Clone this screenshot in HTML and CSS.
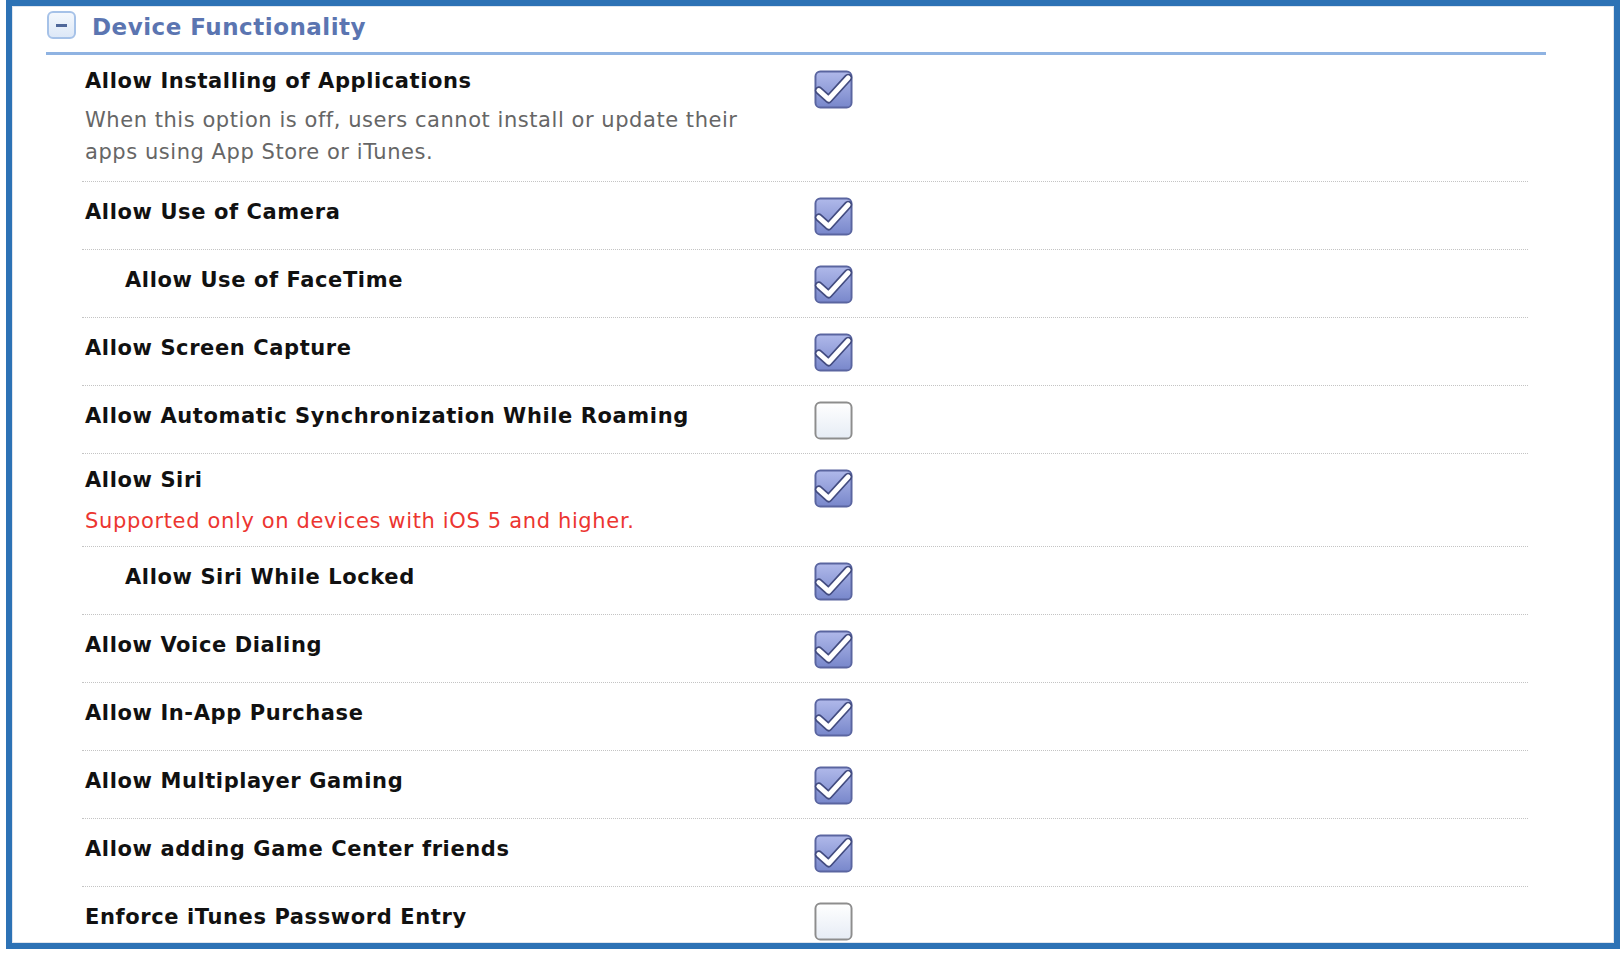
FILE: index.html
```html
<!DOCTYPE html>
<html lang="en">
<head>
  <meta charset="UTF-8" />
  <title>Device Functionality</title>
  <link rel="stylesheet" href="styles.css">
</head>
<body>
  <svg width="0" height="0" class="defs">
    <defs>
      <linearGradient id="onFill" x1="0" y1="0" x2="0" y2="1">
        <stop offset="0" stop-color="#b0b9ea" />
        <stop offset="1" stop-color="#7887cb" />
      </linearGradient>
      <linearGradient id="offFill" x1="0" y1="0" x2="0" y2="1">
        <stop offset="0" stop-color="#ffffff" />
        <stop offset="1" stop-color="#e6ecf5" />
      </linearGradient>
      <symbol id="boxOn" viewBox="0 0 40 40">
        <rect x="1.5" y="1.5" width="37" height="37" rx="5" fill="url(#onFill)" stroke="#5a65a0" stroke-width="2" />
        <path d="M5 21 L15 30 L35 8" fill="none" stroke="#434c80" stroke-width="8.5" stroke-linejoin="round" stroke-linecap="round" />
        <path d="M5 21 L15 30 L35 8" fill="none" stroke="#ffffff" stroke-width="5" stroke-linejoin="round" stroke-linecap="round" />
      </symbol>
      <symbol id="boxOff" viewBox="0 0 40 40">
        <rect x="1.5" y="1.5" width="37" height="37" rx="5" fill="url(#offFill)" stroke="#8d8d8d" stroke-width="2" />
      </symbol>
    </defs>
  </svg>

  <div class="frame">
    <div class="panel">
      <div class="section">
        <div class="section-head">
          <span class="toggle"><span class="dash"></span></span>
          <h2>Device Functionality</h2>
        </div>

        <div class="rows">
          <div class="row first">
            <div class="text">
              <div class="label">Allow Installing of Applications</div>
              <div class="desc">When this option is off, users cannot install or update their<br>apps using App Store or iTunes.</div>
            </div>
            <svg class="check"><use href="#boxOn" /></svg>
          </div>

          <div class="row">
            <div class="text"><div class="label">Allow Use of Camera</div></div>
            <svg class="check"><use href="#boxOn" /></svg>
          </div>

          <div class="row sub">
            <div class="text"><div class="label">Allow Use of FaceTime</div></div>
            <svg class="check"><use href="#boxOn" /></svg>
          </div>

          <div class="row">
            <div class="text"><div class="label">Allow Screen Capture</div></div>
            <svg class="check"><use href="#boxOn" /></svg>
          </div>

          <div class="row">
            <div class="text"><div class="label">Allow Automatic Synchronization While Roaming</div></div>
            <svg class="check"><use href="#boxOff" /></svg>
          </div>

          <div class="row noted">
            <div class="text">
              <div class="label">Allow Siri</div>
              <div class="desc warn">Supported only on devices with iOS 5 and higher.</div>
            </div>
            <svg class="check"><use href="#boxOn" /></svg>
          </div>

          <div class="row sub">
            <div class="text"><div class="label">Allow Siri While Locked</div></div>
            <svg class="check"><use href="#boxOn" /></svg>
          </div>

          <div class="row">
            <div class="text"><div class="label">Allow Voice Dialing</div></div>
            <svg class="check"><use href="#boxOn" /></svg>
          </div>

          <div class="row">
            <div class="text"><div class="label">Allow In-App Purchase</div></div>
            <svg class="check"><use href="#boxOn" /></svg>
          </div>

          <div class="row">
            <div class="text"><div class="label">Allow Multiplayer Gaming</div></div>
            <svg class="check"><use href="#boxOn" /></svg>
          </div>

          <div class="row">
            <div class="text"><div class="label">Allow adding Game Center friends</div></div>
            <svg class="check"><use href="#boxOn" /></svg>
          </div>

          <div class="row last">
            <div class="text"><div class="label">Enforce iTunes Password Entry</div></div>
            <svg class="check"><use href="#boxOff" /></svg>
          </div>
        </div>
      </div>
    </div>
  </div>
</body>
</html>
```

FILE: styles.css
```css
body {
  margin: 0;
  background: #fff;
  font-family: "DejaVu Sans", Verdana, sans-serif;
}
.defs {
  position: absolute;
}
.frame {
  margin-left: 6px;
  width: 1614px;
  height: 949px;
  box-sizing: border-box;
  border: 6px solid #2d72b5;
  overflow: hidden;
}
.panel {
  height: 100%;
  box-sizing: border-box;
  border: 1px solid #dfe5ee;
}
.section {
  margin-left: 33px;
  width: 1500px;
}
.section-head {
  display: flex;
  align-items: flex-start;
  height: 48px;
  box-sizing: border-box;
  padding-top: 4px;
  border-bottom: 3px solid #8fb3e2;
}
.toggle {
  display: flex;
  align-items: center;
  justify-content: center;
  width: 29px;
  height: 28px;
  margin-left: 1px;
  box-sizing: border-box;
  border: 2px solid #a6c2e8;
  border-radius: 6px;
  background: linear-gradient(#f4f8fd, #dde8f7);
}
.dash {
  width: 11px;
  height: 3px;
  background: #50689a;
}
.section-head h2 {
  margin: 0 0 0 16px;
  font-size: 23px;
  line-height: 32px;
  letter-spacing: 0.5px;
  color: #5b75b1;
}
.rows {
  margin-left: 36px;
  width: 1446px;
}
.row {
  display: grid;
  grid-template-columns: 732px 39px;
  padding: 15px 0 13px;
  border-bottom: 1px dotted #c4c4c4;
}
.row.last {
  border-bottom: none;
}
.label {
  padding: 4px 0 0 3px;
  font-size: 21px;
  font-weight: bold;
  line-height: 22px;
  letter-spacing: 0.6px;
  color: #111;
  white-space: nowrap;
}
.row.first .label,
.row.noted .label {
  padding-top: 0;
}
.row.sub .label {
  padding-left: 43px;
}
.desc {
  margin-top: 12px;
  padding-left: 3px;
  font-size: 21px;
  line-height: 32px;
  letter-spacing: 0.55px;
  color: #666;
  white-space: nowrap;
}
.row.noted {
  padding-bottom: 9px;
}
.desc.warn {
  margin-top: 14px;
  letter-spacing: 0.65px;
  color: #ec3530;
}
.check {
  width: 39px;
  height: 39px;
}
```
